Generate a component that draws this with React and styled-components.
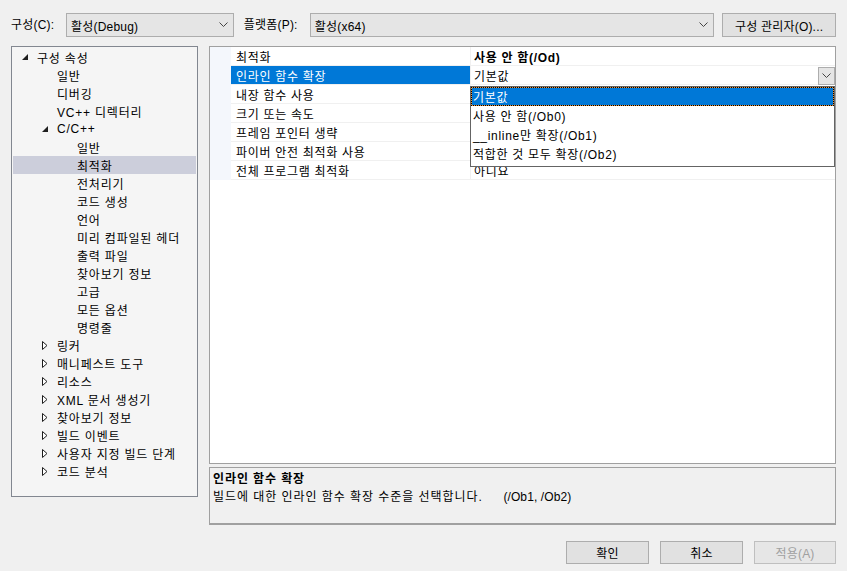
import React from "react";
import styled, { createGlobalStyle } from "styled-components";

const GlobalStyle = createGlobalStyle`
	html, body {
		margin: 0;
		padding: 0;
		background: #f0f0f0;
	}
	* {
		box-sizing: border-box;
	}
`;

const Dialog = styled.div`
	width: 847px;
	height: 571px;
	background: #f0f0f0;
	font-family: "Liberation Sans", "Noto Sans CJK KR", sans-serif;
	font-size: 12px;
	letter-spacing: 0.7px;
	color: #000;
	display: flex;
	flex-direction: column;
	padding: 13px 11px 0 11px;
	overflow: hidden;
`;

const TopBar = styled.div`
	display: flex;
	align-items: center;
	height: 24px;
	letter-spacing: 0.2px;
`;

const Label = styled.span`
	width: ${(p) => p.$width}px;
	flex-shrink: 0;
	line-height: 24px;
	white-space: nowrap;
`;

const Combo = styled.div`
	width: ${(p) => p.$width}px;
	height: 24px;
	border: 1px solid #adadad;
	background: #e5e5e5;
	display: flex;
	align-items: center;
	justify-content: space-between;
	padding: 0 5px 0 4px;
	margin-right: ${(p) => p.$gap}px;
`;

const Button = styled.div`
	width: ${(p) => p.$width}px;
	height: ${(p) => p.$height || 23}px;
	border: 1px solid ${(p) => (p.$disabled ? "#bfbfbf" : "#adadad")};
	background: ${(p) => (p.$disabled ? "#e6e6e6" : "#e1e1e1")};
	display: flex;
	align-items: center;
	justify-content: center;
	letter-spacing: 0.2px;
	color: ${(p) => (p.$disabled ? "#a0a0a0" : "#000")};
`;

const Main = styled.div`
	display: flex;
	align-items: flex-start;
	gap: 11px;
	margin-top: 9px;
`;

const Tree = styled.div`
	width: 187px;
	height: 451px;
	flex-shrink: 0;
	border: 1px solid #828790;
	background: #f5f5f5;
	padding: 1px 1px 0 1px;
	letter-spacing: 0.8px;
`;

const TreeRow = styled.div`
	display: flex;
	align-items: center;
	height: 18px;
	padding-left: ${(p) => 9 + p.$level * 20}px;
	background: ${(p) => (p.$selected ? "#cccedb" : "transparent")};
	white-space: nowrap;
`;

const Twisty = styled.span`
	width: 15px;
	height: 18px;
	display: flex;
	align-items: center;
	flex-shrink: 0;
`;

const RightCol = styled.div`
	flex: 1;
	display: flex;
	flex-direction: column;
	gap: 3px;
`;

const Grid = styled.div`
	position: relative;
	height: 418px;
	flex-shrink: 0;
	border: 1px solid #a0a0a0;
	background: #fff;
`;

const GridRow = styled.div`
	display: flex;
	height: 19px;
`;

const Margin = styled.div`
	width: 21px;
	background: #f4f7fc;
`;

const NameCell = styled.div`
	width: 240px;
	padding-left: 5px;
	display: flex;
	align-items: center;
	border-bottom: 1px solid #f0f0f0;
	border-right: 1px solid #f0f0f0;
	background: ${(p) => (p.$selected ? "#0078d7" : "#fff")};
	color: ${(p) => (p.$selected ? "#fff" : "#000")};
`;

const ValueCell = styled.div`
	flex: 1;
	padding-left: 3px;
	display: flex;
	align-items: center;
	justify-content: space-between;
	border-bottom: 1px solid #f0f0f0;
	font-weight: ${(p) => (p.$bold ? 700 : 400)};
`;

const DropButton = styled.div`
	width: 17px;
	height: 18px;
	border: 1px solid #adadad;
	background: #e5e5e5;
	display: flex;
	align-items: center;
	justify-content: center;
	margin-top: 1px;
`;

const DropList = styled.div`
	position: absolute;
	left: 260px;
	top: 39px;
	width: 365px;
	height: 81px;
	border: 1px solid #646464;
	background: #fff;
`;

const DropItem = styled.div`
	height: 19px;
	display: flex;
	align-items: center;
	padding-left: 1px;
	color: ${(p) => (p.$selected ? "#fff" : "#000")};
	border: 1px solid transparent;
	${(p) =>
		p.$selected &&
		`
		border: 1px dotted #000;
		background: linear-gradient(#0078d7, #0078d7) padding-box, linear-gradient(#e8923a, #e8923a) border-box;
	`}
`;

const Description = styled.div`
	height: 58px;
	flex-shrink: 0;
	border: 1px solid #a0a0a0;
	border-bottom: 2px solid #a0a0a0;
	background: #f0f0f0;
	padding: 2px 3px;
	line-height: 18px;
`;

const DescTitle = styled.div`
	font-weight: 700;
	letter-spacing: 0.9px;
`;

const DescText = styled.div`
	white-space: pre;
	letter-spacing: 0.95px;
`;

const Switch = styled.span`
	letter-spacing: 0.1px;
`;

const Footer = styled.div`
	display: flex;
	justify-content: flex-end;
	gap: 11px;
	margin-top: 16px;
`;

const Chevron = () => (
	<svg width="9" height="6" viewBox="0 0 9 6">
		<path d="M0.5 0.5 L4.5 4.5 L8.5 0.5" fill="none" stroke="#444" strokeWidth="1" />
	</svg>
);

const OpenTri = () => (
	<svg width="6" height="6" viewBox="0 0 6 6">
		<path d="M6 0 L6 6 L0 6 Z" fill="#1e1e1e" />
	</svg>
);

const ClosedTri = () => (
	<svg width="6" height="9" viewBox="0 0 6 9">
		<path d="M0.5 0.5 L5 4.5 L0.5 8.5 Z" fill="#fff" stroke="#1e1e1e" strokeWidth="1" />
	</svg>
);

const tree = [
	{ label: "구성 속성", level: 0, state: "open" },
	{ label: "일반", level: 1 },
	{ label: "디버깅", level: 1 },
	{ label: "VC++ 디렉터리", level: 1 },
	{ label: "C/C++", level: 1, state: "open" },
	{ label: "일반", level: 2 },
	{ label: "최적화", level: 2, selected: true },
	{ label: "전처리기", level: 2 },
	{ label: "코드 생성", level: 2 },
	{ label: "언어", level: 2 },
	{ label: "미리 컴파일된 헤더", level: 2 },
	{ label: "출력 파일", level: 2 },
	{ label: "찾아보기 정보", level: 2 },
	{ label: "고급", level: 2 },
	{ label: "모든 옵션", level: 2 },
	{ label: "명령줄", level: 2 },
	{ label: "링커", level: 1, state: "closed" },
	{ label: "매니페스트 도구", level: 1, state: "closed" },
	{ label: "리소스", level: 1, state: "closed" },
	{ label: "XML 문서 생성기", level: 1, state: "closed" },
	{ label: "찾아보기 정보", level: 1, state: "closed" },
	{ label: "빌드 이벤트", level: 1, state: "closed" },
	{ label: "사용자 지정 빌드 단계", level: 1, state: "closed" },
	{ label: "코드 분석", level: 1, state: "closed" },
];

const props = [
	{ name: "최적화", value: "사용 안 함(/Od)", bold: true },
	{ name: "인라인 함수 확장", value: "기본값", selected: true },
	{ name: "내장 함수 사용", value: "" },
	{ name: "크기 또는 속도", value: "" },
	{ name: "프레임 포인터 생략", value: "" },
	{ name: "파이버 안전 최적화 사용", value: "" },
	{ name: "전체 프로그램 최적화", value: "아니요" },
];

const options = ["기본값", "사용 안 함(/Ob0)", "__inline만 확장(/Ob1)", "적합한 것 모두 확장(/Ob2)"];

export default function App() {
	return (
		<>
			<GlobalStyle />
			<Dialog>
				<TopBar>
					<Label $width={55}>구성(C):</Label>
					<Combo $width={168} $gap={10}>
						<span>활성(Debug)</span>
						<Chevron />
					</Combo>
					<Label $width={66}>플랫폼(P):</Label>
					<Combo $width={405} $gap={8}>
						<span>활성(x64)</span>
						<Chevron />
					</Combo>
					<Button $width={114} $height={24}>구성 관리자(O)...</Button>
				</TopBar>
				<Main>
					<Tree>
						{tree.map((t, i) => (
							<TreeRow key={i} $level={t.level} $selected={t.selected}>
								<Twisty>
									{t.state === "open" && <OpenTri />}
									{t.state === "closed" && <ClosedTri />}
								</Twisty>
								{t.label}
							</TreeRow>
						))}
					</Tree>
					<RightCol>
						<Grid>
							{props.map((p, i) => (
								<GridRow key={i}>
									<Margin />
									<NameCell $selected={p.selected}>{p.name}</NameCell>
									<ValueCell $bold={p.bold}>
										<span>{p.value}</span>
										{p.selected && (
											<DropButton>
												<Chevron />
											</DropButton>
										)}
									</ValueCell>
								</GridRow>
							))}
							<DropList>
								{options.map((o, i) => (
									<DropItem key={i} $selected={i === 0}>
										{o}
									</DropItem>
								))}
							</DropList>
						</Grid>
						<Description>
							<DescTitle>인라인 함수 확장</DescTitle>
							<DescText>
								빌드에 대한 인라인 함수 확장 수준을 선택합니다.
								<Switch>{"      (/Ob1, /Ob2)"}</Switch>
							</DescText>
						</Description>
					</RightCol>
				</Main>
				<Footer>
					<Button $width={83}>확인</Button>
					<Button $width={83}>취소</Button>
					<Button $width={82} $disabled>적용(A)</Button>
				</Footer>
			</Dialog>
		</>
	);
}
